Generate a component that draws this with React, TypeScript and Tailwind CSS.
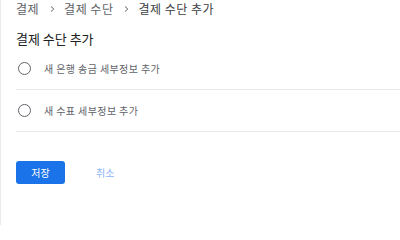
import React from "react";

const font = { fontFamily: '"Noto Sans CJK KR", "Noto Sans", sans-serif' };

function Chevron() {
  return (
    <svg className="ml-[11px] mr-[9px] h-[8px] w-[5px]" viewBox="0 0 5 8" fill="none">
      <path d="M1 1.5 L3.8 4 L1 6.5" stroke="#5f6368" strokeWidth="1" />
    </svg>
  );
}

function Row({ label }: { label: string }) {
  return (
    <div className="flex h-[42px] items-center border-b border-[#e8eaed]">
      <div className="ml-[2px] h-[13px] w-[13px] rounded-full border-[1.5px] border-[#5f6368]" />
      <span className="ml-[13px] text-[10px] leading-[14px] tracking-[0.4px] text-[#5f6368]">{label}</span>
    </div>
  );
}

export default function App() {
  return (
    <div
      className="flex h-[225px] w-[400px] flex-col overflow-hidden border-l border-[#ebebeb] bg-white pl-[15px]"
      style={font}
    >
      <div className="mt-[1px] flex items-center text-[12px] leading-[16px] tracking-[0.5px] text-[#5f6368]">
        <span>결제</span>
        <Chevron />
        <span>결제 수단</span>
        <Chevron />
        <span className="text-[#3c4043]">결제 수단 추가</span>
      </div>
      <div className="mt-[13px] text-[13px] leading-[18px] text-[#202124]">결제 수단 추가</div>
      <div>
        <Row label="새 은행 송금 세부정보 추가" />
        <Row label="새 수표 세부정보 추가" />
      </div>
      <div className="mt-[29px] flex items-center">
        <button className="h-[23px] w-[49px] rounded-[3px] bg-[#1a73e8] text-[10px] text-white">저장</button>
        <button className="ml-[31px] text-[10px] text-[#8ab4f8]">취소</button>
      </div>
    </div>
  );
}
